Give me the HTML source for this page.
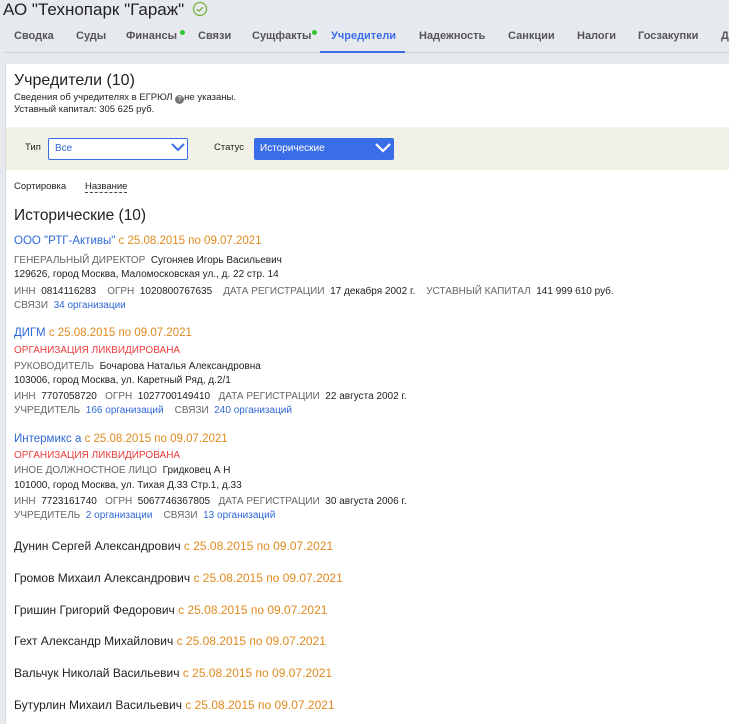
<!DOCTYPE html><html><head><meta charset="utf-8"><style>
body{margin:0;width:729px;height:722px;overflow:hidden;background:#e6e9ed;font-family:"Liberation Sans",sans-serif;color:#222;position:relative}
.a{position:absolute;white-space:nowrap}
.tab{position:absolute;top:30px;font-size:11px;font-weight:bold;color:#555}
.o{color:#e08a1e}.b{color:#2f68d8}.g{color:#666}.r{color:#ec3b3b}
.s{font-size:9.5px}
.e{font-size:10px}
.p{font-size:12px}
</style></head><body>
<div class="a" style="left:3px;top:0px;font-size:17px">АО "Технопарк "Гараж"</div>
<svg class="a" style="left:192px;top:1px" width="16" height="16"><circle cx="8" cy="8" r="6.5" fill="none" stroke="#7bb342" stroke-width="1.3"/><path d="M5 8.2l2 2 4-4" fill="none" stroke="#7bb342" stroke-width="1.3"/></svg>
<div class="tab" style="left:14px">Сводка</div>
<div class="tab" style="left:76px">Суды</div>
<div class="tab" style="left:126px">Финансы</div>
<div class="a" style="left:180px;top:30px;width:5px;height:5px;border-radius:50%;background:#2ec52e"></div>
<div class="tab" style="left:198px">Связи</div>
<div class="tab" style="left:252px">Сущфакты</div>
<div class="a" style="left:312px;top:30px;width:5px;height:5px;border-radius:50%;background:#2ec52e"></div>
<div class="tab" style="left:331px;color:#3a6ee8">Учредители</div>
<div class="tab" style="left:419px">Надежность</div>
<div class="tab" style="left:508px">Санкции</div>
<div class="tab" style="left:577px">Налоги</div>
<div class="tab" style="left:638px">Госзакупки</div>
<div class="tab" style="left:721px">Д</div>
<div class="a" style="left:5px;top:52px;width:724px;height:1px;background:#c9ccd0"></div>
<div class="a" style="left:320px;top:51px;width:85px;height:2px;background:#3a6ee8"></div>
<div class="a" style="left:5px;top:64px;width:724px;height:660px;background:#fff;border-left:1px solid #d8dadd"></div>
<div class="a" style="left:14px;top:72px;font-size:16px">Учредители (10)</div>
<div class="a s" style="left:14px;top:92px">Сведения об учредителях в ЕГРЮЛ <span style="display:inline-block;width:9px;height:9px;border-radius:50%;background:#777;color:#fff;font-size:7px;text-align:center;line-height:9px;vertical-align:-1px">?</span>не указаны.</div>
<div class="a s" style="left:14px;top:104px">Уставный капитал: 305 625 руб.</div>
<div class="a" style="left:6px;top:127px;width:723px;height:43px;background:#f1f1e8"></div>
<div class="a s" style="left:25px;top:142px">Тип</div>
<div class="a" style="left:48px;top:138px;width:138px;height:20px;border:1px solid #3a6ee8;border-radius:2px;background:#fff"></div>
<div class="a e b" style="left:55px;top:143px">Все</div>
<svg class="a" style="left:171px;top:142px" width="14" height="10"><path d="M1 2l6 6 6-6" fill="none" stroke="#3a6ee8" stroke-width="2"/></svg>
<div class="a s" style="left:214px;top:142px">Статус</div>
<div class="a" style="left:254px;top:138px;width:140px;height:22px;background:#3a6ee8;border-radius:2px"></div>
<div class="a e" style="left:260px;top:143px;color:#fff">Исторические</div>
<svg class="a" style="left:375px;top:142px" width="16" height="11"><path d="M1 2l7 7 7-7" fill="none" stroke="#fff" stroke-width="2.2"/></svg>
<div class="a s" style="left:14px;top:181px">Сортировка</div>
<div class="a s" style="left:85px;top:181px;border-bottom:1px dashed #444">Название</div>
<div class="a" style="left:14px;top:207px;font-size:15.5px">Исторические (10)</div>

<div class="a" style="left:14px;top:235px;font-size:11.5px"><span class="b">ООО "РТГ-Активы"</span> <span class="o">с 25.08.2015 по 09.07.2021</span></div>
<div class="a e" style="left:14px;top:255px"><span class="g">ГЕНЕРАЛЬНЫЙ ДИРЕКТОР</span>&nbsp; Сугоняев Игорь Васильевич</div>
<div class="a e" style="left:14px;top:269px">129626, город Москва, Маломосковская ул., д. 22 стр. 14</div>
<div class="a e" style="left:14px;top:286px"><span class="g">ИНН</span>&nbsp; 0814116283 &nbsp; &nbsp;<span class="g">ОГРН</span>&nbsp; 1020800767635 &nbsp; &nbsp;<span class="g">ДАТА РЕГИСТРАЦИИ</span>&nbsp; 17 декабря 2002 г. &nbsp; &nbsp;<span class="g">УСТАВНЫЙ КАПИТАЛ</span>&nbsp; 141 999 610 руб.</div>
<div class="a e" style="left:14px;top:300px"><span class="g">СВЯЗИ</span>&nbsp; <span class="b">34 организации</span></div>

<div class="a" style="left:14px;top:327px;font-size:11.5px"><span class="b">ДИГМ</span> <span class="o">с 25.08.2015 по 09.07.2021</span></div>
<div class="a e r" style="left:14px;top:345px">ОРГАНИЗАЦИЯ ЛИКВИДИРОВАНА</div>
<div class="a e" style="left:14px;top:361px"><span class="g">РУКОВОДИТЕЛЬ</span>&nbsp; Бочарова Наталья Александровна</div>
<div class="a e" style="left:14px;top:375px">103006, город Москва, ул. Каретный Ряд, д.2/1</div>
<div class="a e" style="left:14px;top:391px"><span class="g">ИНН</span>&nbsp; 7707058720 &nbsp; <span class="g">ОГРН</span>&nbsp; 1027700149410 &nbsp; <span class="g">ДАТА РЕГИСТРАЦИИ</span>&nbsp; 22 августа 2002 г.</div>
<div class="a e" style="left:14px;top:405px"><span class="g">УЧРЕДИТЕЛЬ</span>&nbsp; <span class="b">166 организаций</span> &nbsp; &nbsp;<span class="g">СВЯЗИ</span>&nbsp; <span class="b">240 организаций</span></div>

<div class="a" style="left:14px;top:433px;font-size:11.5px"><span class="b">Интермикс а</span> <span class="o">с 25.08.2015 по 09.07.2021</span></div>
<div class="a e r" style="left:14px;top:450px">ОРГАНИЗАЦИЯ ЛИКВИДИРОВАНА</div>
<div class="a e" style="left:14px;top:465px"><span class="g">ИНОЕ ДОЛЖНОСТНОЕ ЛИЦО</span>&nbsp; Гридковец А Н</div>
<div class="a e" style="left:14px;top:480px">101000, город Москва, ул. Тихая Д.33 Стр.1, д.33</div>
<div class="a e" style="left:14px;top:496px"><span class="g">ИНН</span>&nbsp; 7723161740 &nbsp; <span class="g">ОГРН</span>&nbsp; 5067746367805 &nbsp; <span class="g">ДАТА РЕГИСТРАЦИИ</span>&nbsp; 30 августа 2006 г.</div>
<div class="a e" style="left:14px;top:510px"><span class="g">УЧРЕДИТЕЛЬ</span>&nbsp; <span class="b">2 организации</span> &nbsp; &nbsp;<span class="g">СВЯЗИ</span>&nbsp; <span class="b">13 организаций</span></div>

<div class="a p" style="left:14px;top:539px">Дунин Сергей Александрович <span class="o">с 25.08.2015 по 09.07.2021</span></div>
<div class="a p" style="left:14px;top:571px">Громов Михаил Александрович <span class="o">с 25.08.2015 по 09.07.2021</span></div>
<div class="a p" style="left:14px;top:603px">Гришин Григорий Федорович <span class="o">с 25.08.2015 по 09.07.2021</span></div>
<div class="a p" style="left:14px;top:634px">Гехт Александр Михайлович <span class="o">с 25.08.2015 по 09.07.2021</span></div>
<div class="a p" style="left:14px;top:666px">Вальчук Николай Васильевич <span class="o">с 25.08.2015 по 09.07.2021</span></div>
<div class="a p" style="left:14px;top:698px">Бутурлин Михаил Васильевич <span class="o">с 25.08.2015 по 09.07.2021</span></div>
</body></html>
